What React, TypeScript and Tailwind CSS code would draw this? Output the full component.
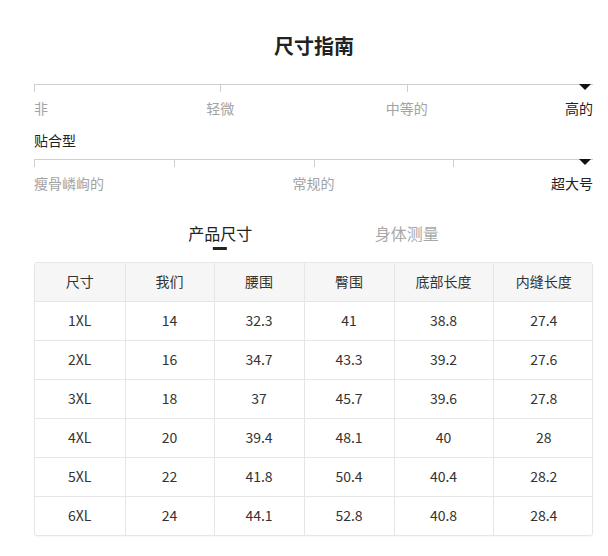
const headers = ['尺寸', '我们', '腰围', '臀围', '底部长度', '内缝长度']
const colWidths = ['w-[90px]', 'w-[89px]', 'w-[90px]', 'w-[90px]', 'w-[99px]', 'w-[101px]']

const rows = [
  ['1XL', '14', '32.3', '41', '38.8', '27.4'],
  ['2XL', '16', '34.7', '43.3', '39.2', '27.6'],
  ['3XL', '18', '37', '45.7', '39.6', '27.8'],
  ['4XL', '20', '39.4', '48.1', '40', '28'],
  ['5XL', '22', '41.8', '50.4', '40.4', '28.2'],
  ['6XL', '24', '44.1', '52.8', '40.8', '28.4'],
]

const Marker = () => (
  <div className="absolute right-[2px] -top-[1px] w-0 h-0 border-l-[6px] border-r-[6px] border-t-[6px] border-l-transparent border-r-transparent border-t-[#111]" />
)

const Scale = ({ segments }: { segments: number }) => (
  <div className="relative flex h-[8px] border-t border-[#cfcfcf]">
    {Array.from({ length: segments }, (_, i) => (
      <div key={i} className="flex-1 border-l border-[#cfcfcf]" />
    ))}
    <Marker />
  </div>
)

export default function App() {
  return (
    <div
      className="w-[608px] h-[556px] bg-white pl-[34px] pr-[15px] text-[#333]"
      style={{ fontFamily: '"Noto Sans CJK SC", "Noto Sans", sans-serif' }}
    >
      <h1 className="pt-[34px] text-center text-[20px] leading-[24px] font-bold text-[#222] pl-[1px]">
        尺寸指南
      </h1>

      <div className="mt-[26px]">
        <Scale segments={3} />
        <div className="relative mt-[6px] h-[20px] text-[14px] leading-[20px] text-[#a3a3a3]">
          <span className="absolute left-0">非</span>
          <span className="absolute left-[33.33%] -translate-x-1/2">轻微</span>
          <span className="absolute left-[66.67%] -translate-x-1/2">中等的</span>
          <span className="absolute right-0 text-[#222]">高的</span>
        </div>
      </div>

      <div className="mt-[12px] text-[14px] leading-[20px] text-[#222]">贴合型</div>

      <div className="mt-[9px]">
        <Scale segments={4} />
        <div className="relative mt-[6px] h-[20px] text-[14px] leading-[20px] text-[#a3a3a3]">
          <span className="absolute left-0">瘦骨嶙峋的</span>
          <span className="absolute left-1/2 -translate-x-1/2">常规的</span>
          <span className="absolute right-0 text-[#222]">超大号</span>
        </div>
      </div>

      <div className="mt-[28px] grid grid-cols-3">
        <div className="flex flex-col items-center col-start-2 -translate-x-1/2">
          <span className="text-[16px] leading-[24px] text-[#222]">产品尺寸</span>
          <span className="mt-[2px] w-[14px] h-[3px] bg-[#222]" />
        </div>
        <div className="flex flex-col items-center col-start-3 -translate-x-1/2">
          <span className="text-[16px] leading-[24px] text-[#a8a8a8]">身体测量</span>
        </div>
      </div>

      <div className="mt-[12px] w-[559px] border border-[#e6e6e6] rounded-[3px] overflow-hidden shadow-[0_1px_2px_rgba(0,0,0,0.04)]">
        <table className="w-full border-collapse table-fixed text-[14px] text-[#333]">
          <thead>
            <tr className="bg-[#f6f6f6]">
              {headers.map((h, i) => (
                <th
                  key={h}
                  className={`${colWidths[i]} h-[38px] font-normal text-center border-b border-[#e6e6e6] ${
                    i < headers.length - 1 ? 'border-r' : ''
                  }`}
                >
                  {h}
                </th>
              ))}
            </tr>
          </thead>
          <tbody>
            {rows.map((row, r) => (
              <tr key={row[0]}>
                {row.map((cell, i) => (
                  <td
                    key={i}
                    className={`h-[39px] text-center border-[#e6e6e6] ${
                      i < row.length - 1 ? 'border-r' : ''
                    } ${r < rows.length - 1 ? 'border-b' : ''}`}
                  >
                    {cell}
                  </td>
                ))}
              </tr>
            ))}
          </tbody>
        </table>
      </div>
    </div>
  )
}
